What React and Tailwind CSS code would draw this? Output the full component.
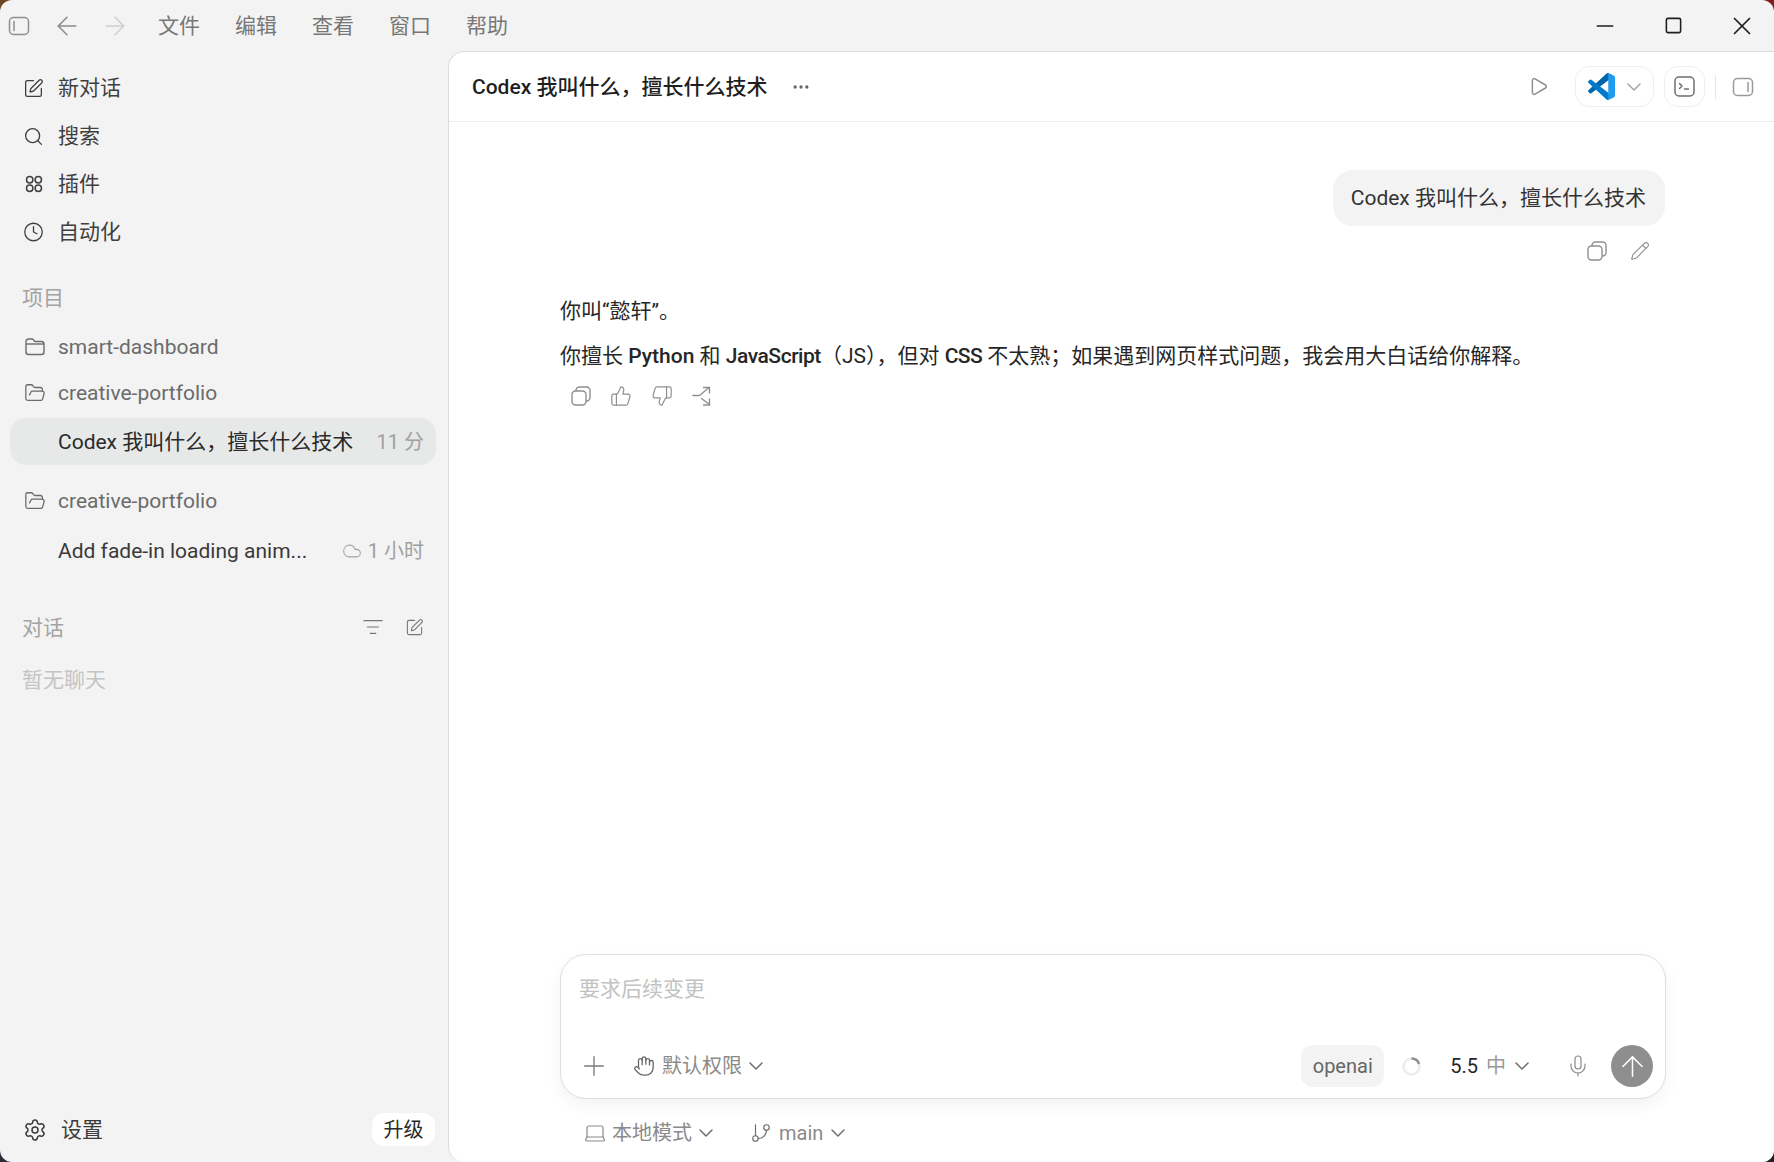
import { ChevronDown, Plus, ArrowUp, Mic, Laptop, GitBranch, Hand, Settings, Search, Clock, Cloud, ListFilter, Ellipsis, ThumbsUp, ThumbsDown, Pencil, Play, Minus, Square, X, ArrowLeft, ArrowRight, FolderOpen, SquarePen } from "lucide-react"

function PluginsIcon() {
  return (
    <svg width="18" height="18" viewBox="0 0 18 18" fill="none" stroke="currentColor" strokeWidth="1.5">
      <circle cx="4.7" cy="4.7" r="3.2" />
      <circle cx="13.3" cy="4.7" r="3.2" />
      <circle cx="4.7" cy="13.3" r="3.2" />
      <circle cx="13.3" cy="13.3" r="3.2" />
    </svg>
  )
}

function ShareIcon() {
  return (
    <svg width="22" height="22" viewBox="0 0 22 22" fill="none" stroke="currentColor" strokeWidth="1.4" strokeLinecap="round" strokeLinejoin="round">
      <path d="M2 10.5h6.5L17.5 3" />
      <path d="M12.5 2.5h6V8" />
      <path d="M10.5 13.5l8 6" />
      <path d="M18.5 14v6h-6" />
    </svg>
  )
}

function CopyIcon() {
  return (
    <svg width="22" height="22" viewBox="0 0 22 22" fill="none" stroke="currentColor" strokeWidth="1.4">
      <rect x="2" y="6" width="14" height="14" rx="3.5" />
      <path d="M6 6v-.5A3.5 3.5 0 0 1 9.5 2h7A3.5 3.5 0 0 1 20 5.5v7a3.500 3.500 0 0 1-3.500 3.500H16" />
    </svg>
  )
}

function FolderClosedIcon() {
  return (
    <svg width="22" height="22" viewBox="0 0 22 22" fill="none" stroke="currentColor" strokeWidth="1.4" strokeLinejoin="round">
      <path d="M2 5.5A2.5 2.5 0 0 1 4.5 3h4L11 5.5h6.5A2.5 2.5 0 0 1 20 8v8a2.500 2.500 0 0 1-2.500 2.500h-13A2.500 2.500 0 0 1 2 16z" />
      <path d="M2 8h18" />
    </svg>
  )
}

function SideToggle({ right }) {
  return (
    <svg width="22" height="20" viewBox="0 0 22 20" fill="none" stroke="currentColor" strokeWidth="1.5" strokeLinecap="round">
      <rect x="1.5" y="1.5" width="19" height="17" rx="4" />
      {right ? <path d="M16 5.5v9" /> : <path d="M6 5.5v9" />}
    </svg>
  )
}

function TerminalIcon() {
  return (
    <svg width="21" height="21" viewBox="0 0 21 21" fill="none" stroke="currentColor" strokeWidth="1.5" strokeLinecap="round" strokeLinejoin="round">
      <rect x="1" y="1" width="19" height="19" rx="4" />
      <path d="M5.500 7.500l2.500 2.500-2.500 2.500" />
      <path d="M10.500 13h4" />
    </svg>
  )
}

function VsCodeIcon() {
  return (
    <svg width="27" height="27" viewBox="0 0 100 100">
      <path fill="#0065A9" d="M96.500 10.800 75.900.9a6.200 6.200 0 0 0-7.100 1.200L1.400 63.600a4.200 4.200 0 0 0 0 6.100l5.500 5a4.200 4.200 0 0 0 5.300.2l81.200-61.600c2.700-2.100 6.600-.1 6.600 3.300v-.2a6.300 6.300 0 0 0-3.500-5.600z" />
      <path fill="#007ACC" d="m96.500 89.200-20.600 9.900a6.200 6.200 0 0 1-7.100-1.200L1.400 36.400a4.200 4.200 0 0 1 0-6.100l5.500-5a4.200 4.200 0 0 1 5.300-.2l81.200 61.600c2.700 2.100 6.600.1 6.600-3.300v.2a6.300 6.300 0 0 1-3.500 5.600z" />
      <path fill="#1F9CF0" d="M75.900 99.100a6.200 6.200 0 0 1-7.100-1.200c2.300 2.300 6.200.7 6.200-2.600V4.700c0-3.300-3.900-4.900-6.200-2.600a6.200 6.200 0 0 1 7.100-1.200l20.600 9.900a6.300 6.300 0 0 1 3.500 5.600v67.200a6.300 6.300 0 0 1-3.500 5.600z" />
    </svg>
  )
}

function Spinner() {
  return (
    <svg width="21" height="21" viewBox="0 0 20 20" fill="none" strokeWidth="2.4">
      <circle cx="10" cy="10" r="7.6" stroke="#ececec" />
      <path d="M10 2.4A7.6 7.6 0 0 1 17.2 7.6" stroke="#8f8f8f" />
    </svg>
  )
}

function NavItem({ icon, label }) {
  return (
    <div className="flex h-12 items-center gap-[14px] pl-[23px] text-[#3f3f3f]">
      <span className="flex w-[21px] justify-center">{icon}</span>
      <span>{label}</span>
    </div>
  )
}

function ProjectRow({ icon, label, className }) {
  return (
    <div className={"flex items-center gap-[12px] pl-[24px] text-[#6b6b6b] " + className}>
      {icon}
      <span>{label}</span>
    </div>
  )
}

export default function App() {
  return (
    <div className="h-[1162px] w-[1774px] overflow-hidden bg-[conic-gradient(#7e1f1f_25%,#222_25%_50%,#2a2e3a_50%_75%,#6e4420_75%)] font-['Roboto','Noto_Sans_CJK_SC',sans-serif] text-[21px] leading-[30px]">
      <div className="flex h-full flex-col overflow-hidden rounded-[12px] bg-[#f3f3f3]">
        {/* TITLE BAR */}
        <div className="flex h-[51px] shrink-0 items-center pl-[8px] text-[#777]">
          <span className="text-[#8f8f8f]"><SideToggle /></span>
          <ArrowLeft size={30} strokeWidth={1.2} className="ml-[22px] text-[#8a8a8a]" />
          <ArrowRight size={30} strokeWidth={1.2} className="ml-[18px] text-[#cfcfcf]" />
          <div className="ml-[28px] flex gap-[35px]">
            <span>文件</span>
            <span>编辑</span>
            <span>查看</span>
            <span>窗口</span>
            <span>帮助</span>
          </div>
          <div className="ml-auto flex items-center pr-[17px] text-[#1f1f1f]">
            <Minus size={26} strokeWidth={1.6} />
            <Square size={19} strokeWidth={2} className="ml-[46px]" />
            <X size={30} strokeWidth={1.4} className="ml-[44px]" />
          </div>
        </div>

        <div className="flex min-h-0 flex-1">
          {/* SIDEBAR */}
          <aside className="flex w-[448px] shrink-0 flex-col pb-[16px]">
            <div className="pt-[13px]">
              <NavItem icon={<SquarePen size={21} strokeWidth={1.5} />} label="新对话" />
              <NavItem icon={<Search size={21} strokeWidth={1.5} />} label="搜索" />
              <NavItem icon={<PluginsIcon />} label="插件" />
              <NavItem icon={<Clock size={22} strokeWidth={1.5} />} label="自动化" />
            </div>

            <div className="mt-[27px] pl-[22px] text-[#a3a3a3]">项目</div>
            <ProjectRow icon={<FolderClosedIcon />} label="smart-dashboard" className="mt-[19px]" />
            <ProjectRow icon={<FolderOpen size={22} strokeWidth={1.4} />} label="creative-portfolio" className="mt-[16px]" />
            <div className="ml-[10px] mr-[12px] mt-[10px] flex h-[47px] items-center justify-between rounded-[16px] bg-[#e7e8e8] pl-[48px] pr-[12px]">
              <span className="text-[#2a2a2a]">Codex 我叫什么，擅长什么技术</span>
              <span className="text-[20px] text-[#a0a0a0]">11 分</span>
            </div>
            <ProjectRow icon={<FolderOpen size={22} strokeWidth={1.4} />} label="creative-portfolio" className="mt-[21px]" />
            <div className="ml-[10px] mr-[12px] mt-[20px] flex items-center justify-between pl-[48px] pr-[12px]">
              <span className="text-[#3a3a3a]">Add fade-in loading anim...</span>
              <span className="flex items-center gap-[6px] text-[20px] text-[#a0a0a0]">
                <Cloud size={20} strokeWidth={1.3} />
                1 小时
              </span>
            </div>

            <div className="mt-[47px] flex items-center pl-[22px] pr-[24px] text-[#a3a3a3]">
              <span>对话</span>
              <ListFilter size={22} strokeWidth={1.3} className="ml-auto -translate-y-px text-[#777]" />
              <SquarePen size={19} strokeWidth={1.4} className="ml-[21px] -translate-y-px text-[#777]" />
            </div>
            <div className="mt-[22px] pl-[22px] text-[#c4c4c4]">暂无聊天</div>

            <div className="mt-auto flex items-center pl-[23px] pr-[13px]">
              <Settings size={24} strokeWidth={1.5} className="text-[#3a3a3a]" />
              <span className="ml-[14px] text-[#3a3a3a]">设置</span>
              <span className="ml-auto flex h-[33px] w-[63px] items-center justify-center rounded-[12px] bg-white text-[20px] text-[#2a2a2a]">升级</span>
            </div>
          </aside>

          {/* MAIN PANEL */}
          <main className="flex min-w-0 flex-1 flex-col rounded-l-[16px] border-l border-t border-[#dcdcdc] bg-white">
            <header className="flex h-[70px] shrink-0 items-center border-b border-[#ececec] pl-[23px] pr-[20px]">
              <span className="font-medium text-[#1f1f1f]">Codex 我叫什么，擅长什么技术</span>
              <Ellipsis size={20} className="ml-[23px] text-[#666]" />
              <Play size={21} strokeWidth={1.7} className="ml-auto text-[#8f8f8f]" />
              <div className="ml-[26px] flex h-[41px] w-[79px] items-center gap-[7px] rounded-[14px] border border-[#efefef] pl-[12px]">
                <VsCodeIcon />
                <ChevronDown size={24} strokeWidth={1.6} className="text-[#a8a8a8]" />
              </div>
              <div className="ml-[10px] flex h-[41px] w-[41px] items-center justify-center rounded-[14px] border border-[#efefef] text-[#6e6e6e]">
                <TerminalIcon />
              </div>
              <div className="ml-[10px] h-[24px] w-px bg-[#e6e6e6]" />
              <span className="ml-[16px] text-[#9a9a9a]"><SideToggle right /></span>
            </header>

            <div className="flex min-h-0 flex-1 flex-col pl-[111px] pr-[108px]">
              {/* MESSAGES */}
              <div className="flex-1">
                <div className="mt-[48px] flex justify-end pr-px">
                  <div className="flex h-[56px] items-center rounded-[20px] bg-[#f3f3f3] pl-[18px] pr-[19px] text-[#333]">
                    Codex 我叫什么，擅长什么技术
                  </div>
                </div>
                <div className="mt-[14px] flex items-center justify-end gap-[22px] pr-[16px] text-[#8f8f8f]">
                  <CopyIcon />
                  <Pencil size={20} strokeWidth={1.3} />
                </div>
                <div className="mt-[34px] text-[#262626]">你叫“懿轩”。</div>
                <div className="mt-[15px] text-[#262626]">
                  你擅长 <span className="font-medium">Python</span> 和 <span className="font-medium tracking-[-0.45px]">JavaScript</span>（JS），但对 <span className="font-medium tracking-[-0.6px]">CSS</span> 不太熟；如果遇到网页样式问题，我会用大白话给你解释。
                </div>
                <div className="mt-[14px] flex gap-[18.5px] pl-[9.5px] text-[#8f8f8f]">
                  <CopyIcon />
                  <ThumbsUp size={22} strokeWidth={1.3} />
                  <ThumbsDown size={22} strokeWidth={1.3} />
                  <ShareIcon />
                </div>
              </div>

              {/* COMPOSER */}
              <div className="flex h-[145px] shrink-0 flex-col rounded-[26px] border border-[#dedede] bg-white pl-[18px] pr-[12px] shadow-[0_6px_16px_rgba(0,0,0,0.05)]">
                <div className="mt-[19px] text-[#c2c2c2]">要求后续变更</div>
                <div className="mt-auto mb-[11px] flex h-[42px] items-center text-[20px]">
                  <Plus size={32} strokeWidth={1} className="-ml-[1px] text-[#7a7a7a]" />
                  <Hand size={22} strokeWidth={1.4} className="ml-[23px] text-[#666]" />
                  <span className="ml-[7px] text-[#8a8a8a]">默认权限</span>
                  <ChevronDown size={24} strokeWidth={1.5} className="ml-[2px] text-[#6e6e6e]" />
                  <span className="ml-auto flex h-[42px] w-[83px] items-center justify-center rounded-[12px] bg-[#f3f3f3] text-[#666]">openai</span>
                  <span className="ml-[17px] flex"><Spinner /></span>
                  <span className="ml-[28px] text-[#262626]">5.5</span>
                  <span className="ml-[8px] text-[#999]">中</span>
                  <ChevronDown size={24} strokeWidth={1.5} className="ml-[4px] text-[#6e6e6e]" />
                  <Mic size={24} strokeWidth={1.2} className="ml-[32px] text-[#8a8a8a]" />
                  <span className="ml-[21px] flex h-[42px] w-[42px] items-center justify-center rounded-full bg-[#8e8e8e] text-white">
                    <ArrowUp size={33} strokeWidth={1.1} />
                  </span>
                </div>
              </div>

              {/* FOOTER */}
              <div className="flex h-[63px] shrink-0 items-center pl-[23px] pt-[5px] text-[20px] text-[#8a8a8a]">
                <Laptop size={24} strokeWidth={1.2} />
                <span className="ml-[5px]">本地模式</span>
                <ChevronDown size={24} strokeWidth={1.5} className="ml-[2px] text-[#6e6e6e]" />
                <GitBranch size={22} strokeWidth={1.3} className="ml-[32px] text-[#6e6e6e]" />
                <span className="ml-[7px]">main</span>
                <ChevronDown size={24} strokeWidth={1.5} className="ml-[3px] text-[#6e6e6e]" />
              </div>
            </div>
          </main>
        </div>
      </div>
    </div>
  )
}
